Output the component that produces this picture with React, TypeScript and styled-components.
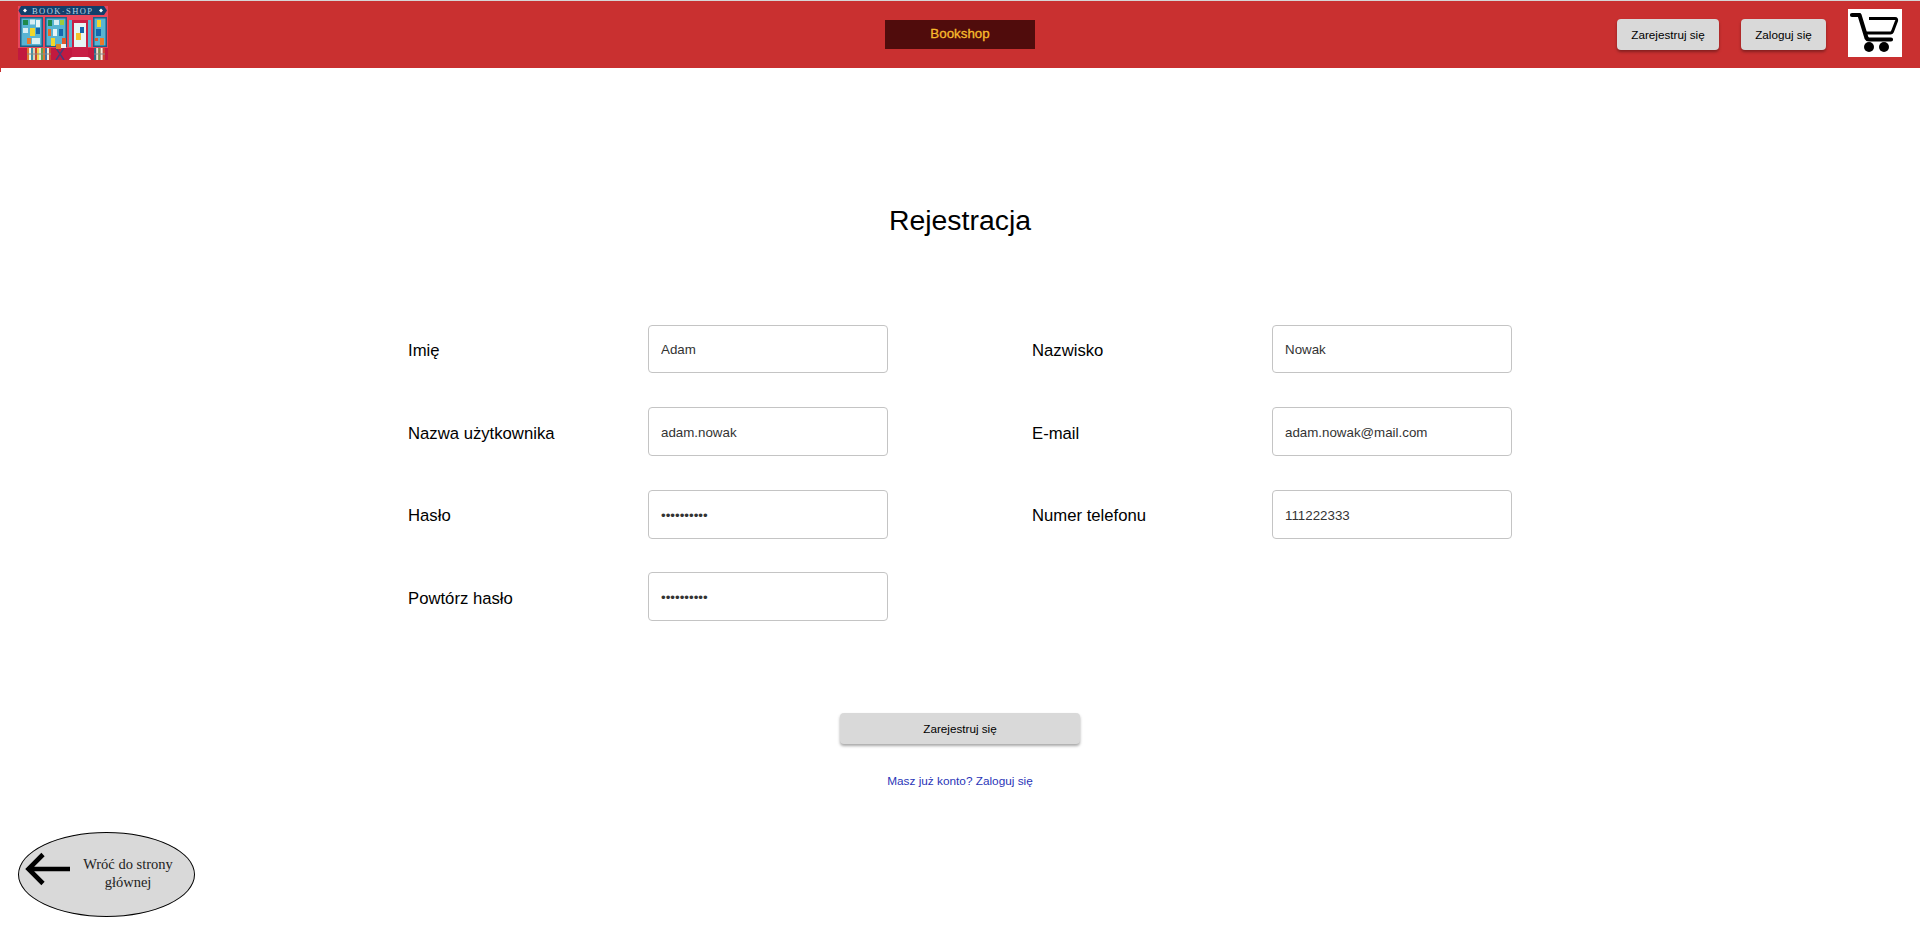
import React from "react";
import styled, { createGlobalStyle } from "styled-components";

const GlobalStyle = createGlobalStyle`
  html, body {
    margin: 0;
    padding: 0;
    background: #fff;
  }
  body {
    font-family: "Liberation Sans", Arial, sans-serif;
    overflow: hidden;
  }
  * {
    box-sizing: border-box;
  }
`;

const Page = styled.div`
  position: relative;
  height: 930px;
  padding-top: 1px;
  background: linear-gradient(#d6d6d6 1px, #fff 1px);
`;

const Header = styled.header`
  position: relative;
  height: 67px;
  display: grid;
  grid-template-columns: 1fr 150px 1fr;
  align-items: center;
  padding: 0 18px;
  background: #c93030;

  &::after {
    content: "";
    position: absolute;
    left: 0;
    top: 100%;
    width: 1px;
    height: 4px;
    background: #c93030;
  }
`;

const LogoBox = styled.div`
  display: flex;
  height: 54px;
  margin-top: -4px;
`;

const Brand = styled.div`
  height: 29px;
  padding-bottom: 2px;
  display: flex;
  align-items: center;
  justify-content: center;
  background: #500c0c;
  color: #f8bb2c;
  font-size: 13.33px;
  font-weight: 400;
  -webkit-text-stroke: 0.3px #f8bb2c;
`;

const HeaderActions = styled.nav`
  display: flex;
  align-items: center;
  justify-content: flex-end;
`;

const HeaderButton = styled.button<{ $width: number; $gap: number }>`
  width: ${(p) => p.$width}px;
  height: 31px;
  margin-right: ${(p) => p.$gap}px;
  padding: 0;
  border: none;
  border-radius: 4px;
  background: #d9d9d9;
  color: #000;
  font-family: "Liberation Sans", Arial, sans-serif;
  font-size: 11.7px;
  box-shadow: 0 2px 3px rgba(0, 0, 0, 0.35);
`;

const CartBox = styled.div`
  width: 54px;
  height: 48px;
  margin-top: -3px;
  background: #fff;
`;

const Title = styled.h1`
  margin: 0;
  padding-top: 133px;
  height: 256.5px;
  text-align: center;
  font-size: 28.4px;
  line-height: 38px;
  font-weight: 400;
  color: #000;
`;

const FormGrid = styled.div`
  width: 1104px;
  margin: 0 auto;
  display: grid;
  grid-template-columns: 240px 240px 384px 240px;
  row-gap: 33.7px;
`;

const FieldRow = styled.div`
  display: contents;
`;

const Label = styled.label<{ $right?: boolean }>`
  display: flex;
  align-items: center;
  height: 48.9px;
  padding-left: ${(p) => (p.$right ? "144px" : "0")};
  padding-top: 4px;
  font-size: 16.7px;
  color: #000;
`;

const Input = styled.input`
  width: 240px;
  height: 48.9px;
  padding: 2px 12px 0;
  border: 1px solid #c4c4c4;
  border-radius: 4px;
  outline: none;
  background: #fff;
  color: #333;
  font-family: "Liberation Sans", Arial, sans-serif;
  font-size: 13.33px;
`;

const SubmitButton = styled.button`
  display: block;
  width: 240px;
  height: 31px;
  margin: 91.8px auto 0;
  padding: 0;
  border: none;
  border-radius: 4px;
  background: #d9d9d9;
  color: #000;
  font-family: "Liberation Sans", Arial, sans-serif;
  font-size: 11.7px;
  box-shadow: 0 2px 3px rgba(0, 0, 0, 0.35);
`;

const LoginLink = styled.a`
  display: block;
  margin-top: 30px;
  text-align: center;
  color: #2a35b8;
  font-size: 11.8px;
  line-height: 14px;
  text-decoration: none;
`;

const BackButton = styled.button`
  position: absolute;
  left: 18px;
  top: 832px;
  width: 177px;
  height: 85px;
  display: flex;
  align-items: center;
  padding: 0 0 0 5px;
  border: 1px solid #000;
  border-radius: 50%;
  background: #d9d9d9;
  color: #222;
  font-family: "Liberation Serif", serif;
  font-size: 14.5px;
  line-height: 18px;
`;

const ArrowWrap = styled.span`
  display: flex;
  margin-bottom: 11px;
`;

const BackText = styled.span`
  width: 100px;
  margin-left: 8px;
  margin-bottom: 4px;
  text-align: center;
`;

const leftBooks = ["#e0772e", "#f2efe0", "#3d8fa8", "#d8d3b8", "#c8452f", "#f0d44a", "#e8e4d0", "#5aa05a", "#e0772e", "#3d6fa8", "#f2efe0", "#c8452f"];
const rightBooks = ["#2d6a8a", "#e8e4d0", "#6a9a4a", "#f2efe0", "#c8452f"];

function Logo() {
  return (
    <svg width="90" height="54" viewBox="0 0 90 54">
      <rect y="0" width="90" height="54" fill="#e8475c" />
      <path d="M3 0H86L89 4.500L86 9H3L0.500 4.500Z" fill="#123f6b" />
      <path d="M7 2.500L9 4.500L7 6.500L5 4.500Z M83 2.500L85 4.500L83 6.500L81 4.500Z" fill="#fff" />
      <text x="14" y="7.500" textLength="60" fontFamily="Liberation Serif" fontSize="8.500" fill="#b7d3e4">
        BOOK·SHOP
      </text>
      <rect x="2" y="11" width="23" height="30" fill="#1d5f86" />
      <rect x="3.500" y="12.500" width="20" height="27" fill="#59b4d2" />
      <rect x="5" y="14" width="5" height="5" fill="#1f8a4c" />
      <rect x="12" y="13.500" width="5" height="5" fill="#d8eef4" />
      <rect x="18" y="14" width="4" height="7" fill="#e6f4f7" />
      <rect x="12" y="22" width="5" height="8" fill="#f1d72b" />
      <rect x="18" y="22" width="4" height="6" fill="#1668ad" />
      <rect x="5" y="22" width="5" height="5" fill="#d7eef3" />
      <rect x="9" y="32" width="4" height="6" fill="#e97a2c" />
      <rect x="14" y="32" width="8" height="6" fill="#d9eff3" />
      <rect x="27" y="11" width="22" height="30" fill="#1d5f86" />
      <rect x="28.500" y="12.500" width="19" height="27" fill="#59b4d2" />
      <rect x="30" y="14" width="4" height="6" fill="#1f8a4c" />
      <rect x="36" y="14" width="5" height="5" fill="#d8eef4" />
      <rect x="42" y="14" width="4" height="5" fill="#9ccc3c" />
      <rect x="30" y="23" width="3" height="7" fill="#e66a2a" />
      <rect x="35" y="23" width="4" height="7" fill="#e6f4f7" />
      <rect x="41" y="23" width="4" height="7" fill="#1668ad" />
      <rect x="33" y="32" width="4" height="8" fill="#f1d72b" />
      <rect x="44" y="32" width="4" height="7" fill="#e2592a" />
      <rect x="51" y="14" width="3" height="27" fill="#59b4d2" />
      <rect x="70" y="14" width="3" height="27" fill="#59b4d2" />
      <rect x="54" y="14" width="16" height="37" fill="#c81f45" />
      <rect x="56" y="17" width="12" height="24" fill="#e6f5f5" />
      <rect x="58" y="27" width="5" height="7" fill="#f3c22c" />
      <rect x="62" y="21" width="4" height="6" fill="#1668ad" />
      <rect x="75" y="11" width="14" height="30" fill="#1d5f86" />
      <rect x="76.500" y="12.500" width="11" height="27" fill="#59b4d2" />
      <rect x="79" y="14" width="4" height="7" fill="#f1d72b" />
      <rect x="78" y="23" width="5" height="7" fill="#1668ad" />
      <rect x="77" y="32" width="3" height="3" fill="#e2592a" />
      <rect x="82" y="32" width="4" height="7" fill="#e97a2c" />
      <rect y="42" width="54" height="12" fill="#c2193f" />
      <rect x="70" y="42" width="20" height="12" fill="#c2193f" />
      {leftBooks.map((color, i) => (
        <rect key={i} x={9 + i * 2} y="42" width="2" height="12" fill={color} />
      ))}
      {rightBooks.map((color, i) => (
        <rect key={i} x={76 + i * 2.2} y="42" width="2.200" height="12" fill={color} />
      ))}
      <rect x="9" y="47.500" width="24" height="1" fill="#8a8a8a" />
      <rect x="76" y="47.500" width="11" height="1" fill="#8a8a8a" />
      <path d="M38 42L46 54M46 42L38 54" stroke="#4a3a78" strokeWidth="1.500" />
      <rect x="38" y="38" width="5" height="5" fill="#d6852a" />
      <rect x="43" y="38" width="5" height="4" fill="#f0f0f0" />
      <path d="M51 54C52 52 53 51 55 51H69C71 51 72 52 73 54Z" fill="#fff" />
    </svg>
  );
}

function CartIcon() {
  return (
    <svg width="54" height="48" viewBox="0 0 54 48">
      <path
        d="M4 6H11.500L18.500 29C19 30 19.500 30.500 21 30.500H43"
        fill="none"
        stroke="#000"
        strokeWidth="4.200"
        strokeLinecap="round"
        strokeLinejoin="round"
      />
      <path
        d="M21 9.500H47C48.500 9.500 49 10.500 48.500 12L44.500 22.500C44 23.500 43.500 24 42.500 24H18"
        fill="none"
        stroke="#000"
        strokeWidth="3"
        strokeLinejoin="round"
      />
      <circle cx="21" cy="38" r="5" fill="#000" />
      <circle cx="36" cy="38" r="5" fill="#000" />
    </svg>
  );
}

function BackArrow() {
  return (
    <svg width="46" height="36" viewBox="0 0 46 36">
      <path d="M46 18H5M19 3.500L4.500 18L19 32.500" fill="none" stroke="#000" strokeWidth="4.600" />
    </svg>
  );
}

const rows = [
  { left: "Imię", leftValue: "Adam", right: "Nazwisko", rightValue: "Nowak" },
  { left: "Nazwa użytkownika", leftValue: "adam.nowak", right: "E-mail", rightValue: "adam.nowak@mail.com" },
  { left: "Hasło", leftValue: "1234567890", leftType: "password", right: "Numer telefonu", rightValue: "111222333" },
  { left: "Powtórz hasło", leftValue: "1234567890", leftType: "password" },
];

export default function App() {
  return (
    <Page>
      <GlobalStyle />
      <Header>
        <LogoBox>
          <Logo />
        </LogoBox>
        <Brand>Bookshop</Brand>
        <HeaderActions>
          <HeaderButton $width={102} $gap={22}>Zarejestruj się</HeaderButton>
          <HeaderButton $width={85} $gap={22}>Zaloguj się</HeaderButton>
          <CartBox>
            <CartIcon />
          </CartBox>
        </HeaderActions>
      </Header>
      <Title>Rejestracja</Title>
      <FormGrid>
        {rows.map((row) => (
          <FieldRow key={row.left}>
            <Label>{row.left}</Label>
            <Input type={row.leftType ?? "text"} defaultValue={row.leftValue} />
            {row.right && (
              <>
                <Label $right>{row.right}</Label>
                <Input defaultValue={row.rightValue} />
              </>
            )}
          </FieldRow>
        ))}
      </FormGrid>
      <SubmitButton>Zarejestruj się</SubmitButton>
      <LoginLink href="#">Masz już konto? Zaloguj się</LoginLink>
      <BackButton>
        <ArrowWrap>
          <BackArrow />
        </ArrowWrap>
        <BackText>Wróć do strony głównej</BackText>
      </BackButton>
    </Page>
  );
}
